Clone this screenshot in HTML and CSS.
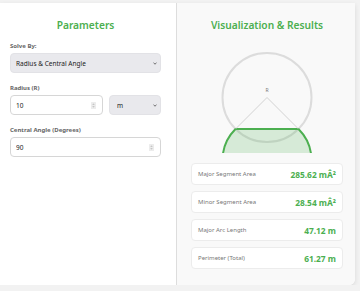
FILE: index.html
```html
<!DOCTYPE html>
<html>
<head>
    <title>Circular Segment Calculator</title>
    <link rel="stylesheet" href="styles.css">
</head>
<body>
    <div class="container">
        <div class="panel params">
            <h2>Parameters</h2>
            <div class="field">
                <label for="solveBy">Solve By:</label>
                <div class="select-box">
                    <select id="solveBy">
                        <option>Radius &amp; Central Angle</option>
                        <option>Radius &amp; Chord Length</option>
                        <option>Radius &amp; Height</option>
                    </select>
                    <svg class="chevron" width="4" height="3" viewBox="0 0 4 3"><path d="M0.5 0.8 L2 2.2 L3.5 0.8" fill="none" stroke="#333" stroke-width="0.7"/></svg>
                </div>
            </div>
            <div class="field">
                <label for="radius">Radius (R)</label>
                <div class="row">
                    <div class="input-box">
                        <input type="number" id="radius" value="10">
                        <svg class="spin" width="5" height="7" viewBox="0 0 5 7"><rect width="5" height="7" rx="0.5" fill="#ececec"/><path d="M1.2 2.8 L2.5 1.4 L3.8 2.8 Z M1.2 4.2 L2.5 5.6 L3.8 4.2 Z" fill="#b8b8b8"/></svg>
                    </div>
                    <div class="select-box unit">
                        <select id="unit">
                            <option>m</option>
                            <option>cm</option>
                            <option>ft</option>
                        </select>
                        <svg class="chevron" width="4" height="3" viewBox="0 0 4 3"><path d="M0.5 0.8 L2 2.2 L3.5 0.8" fill="none" stroke="#333" stroke-width="0.7"/></svg>
                    </div>
                </div>
            </div>
            <div class="field">
                <label for="angle">Central Angle (Degrees)</label>
                <div class="input-box">
                    <input type="number" id="angle" value="90">
                    <svg class="spin" width="5" height="7" viewBox="0 0 5 7"><rect width="5" height="7" rx="0.5" fill="#ececec"/><path d="M1.2 2.8 L2.5 1.4 L3.8 2.8 Z M1.2 4.2 L2.5 5.6 L3.8 4.2 Z" fill="#b8b8b8"/></svg>
                </div>
            </div>
        </div>
        <div class="panel results">
            <h2>Visualization &amp; Results</h2>
            <svg class="viz" width="152" height="108" viewBox="0 0 152 108">
                <circle cx="76" cy="52.5" r="44.5" fill="none" stroke="#dcdcdc" stroke-width="2"/>
                <path d="M 44.5 84 A 44.5 44.5 0 1 0 107.5 84 Z" fill="rgba(76,175,80,0.2)" stroke="#4caf50" stroke-width="2"/>
                <line x1="76" y1="52.5" x2="44.5" y2="84" stroke="#c8c8c8" stroke-width="0.8"/>
                <line x1="76" y1="52.5" x2="107.5" y2="84" stroke="#c8c8c8" stroke-width="0.8"/>
                <text x="76" y="47" text-anchor="middle" class="viz-label">R</text>
            </svg>
            <div class="result-list">
                <div class="result">
                    <span class="result-name">Major Segment Area</span>
                    <span class="result-value">285.62 mÂ²</span>
                </div>
                <div class="result">
                    <span class="result-name">Minor Segment Area</span>
                    <span class="result-value">28.54 mÂ²</span>
                </div>
                <div class="result">
                    <span class="result-name">Major Arc Length</span>
                    <span class="result-value">47.12 m</span>
                </div>
                <div class="result">
                    <span class="result-name">Perimeter (Total)</span>
                    <span class="result-value">61.27 m</span>
                </div>
            </div>
        </div>
    </div>
</body>
</html>
```

FILE: styles.css
```css
body {
    margin: 0;
    padding-top: 3px;
    background: #f2f2f2;
    font-family: 'Segoe UI', 'Noto Sans', sans-serif;
    color: #333;
}
.container {
    width: 355px;
    height: 282px;
    display: grid;
    grid-template-columns: 177px 1fr;
    background: white;
    border-radius: 0 0 6px 0;
    box-shadow: 0 2px 5px rgba(0,0,0,0.1);
    overflow: hidden;
}
.panel {
    padding-top: 15px;
}
.params {
    background: white;
    border-right: 1px solid #dddddd;
    padding-left: 10px;
    padding-right: 15px;
}
.results {
    background: #f9f9f9;
    padding-left: 14px;
    padding-right: 12px;
    display: flex;
    flex-direction: column;
    align-items: center;
}
h2 {
    margin: 0 0 10px;
    font-size: 10.2px;
    line-height: 14px;
    font-weight: 600;
    color: #4caf50;
    text-align: center;
}
.results h2 {
    width: 100%;
}
.field {
    margin-bottom: 11px;
}
label {
    display: block;
    font-size: 6px;
    line-height: 8px;
    font-weight: 700;
    color: #666;
    margin-bottom: 3px;
}
.select-box {
    position: relative;
    height: 20px;
}
.select-box select {
    appearance: none;
    display: block;
    width: 100%;
    height: 20px;
    box-sizing: border-box;
    font-family: inherit;
    font-size: 6.5px;
    color: #222;
    background: #e9e9ed;
    border: 1px solid #e2e2e6;
    border-radius: 4px;
    padding: 0 12px 0 5px;
    margin: 0;
}
.chevron {
    position: absolute;
    right: 4px;
    top: 8.5px;
    pointer-events: none;
}
.input-box {
    display: flex;
    align-items: center;
    height: 20px;
    box-sizing: border-box;
    background: white;
    border: 1px solid #d6d6d6;
    border-radius: 4px;
    padding: 0 6px 0 5px;
}
.input-box input {
    flex: 1;
    min-width: 0;
    border: none;
    outline: none;
    padding: 0;
    margin: 0;
    background: transparent;
    font-family: inherit;
    font-size: 6.5px;
    color: #222;
    appearance: textfield;
}
.input-box input::-webkit-inner-spin-button {
    display: none;
}
.spin {
    flex: none;
}
.row {
    display: flex;
    gap: 6px;
}
.row .input-box {
    flex: 1;
    min-width: 0;
}
.row .unit {
    width: 52px;
    flex: none;
}
.row .unit select {
    padding-left: 7px;
}
.viz {
    display: block;
    margin-top: 3px;
}
.viz-label {
    font-size: 5px;
    fill: #777;
}
.result-list {
    width: 100%;
    margin-top: 10px;
    display: flex;
    flex-direction: column;
    gap: 6px;
}
.result {
    display: flex;
    justify-content: space-between;
    align-items: center;
    min-height: 22px;
    box-sizing: border-box;
    padding: 0 6px;
    background: white;
    border: 1px solid #ececec;
    border-radius: 4px;
}
.result-name {
    font-size: 6px;
    color: #777;
}
.result-value {
    font-size: 8.4px;
    font-weight: 700;
    color: #4caf50;
}
```
